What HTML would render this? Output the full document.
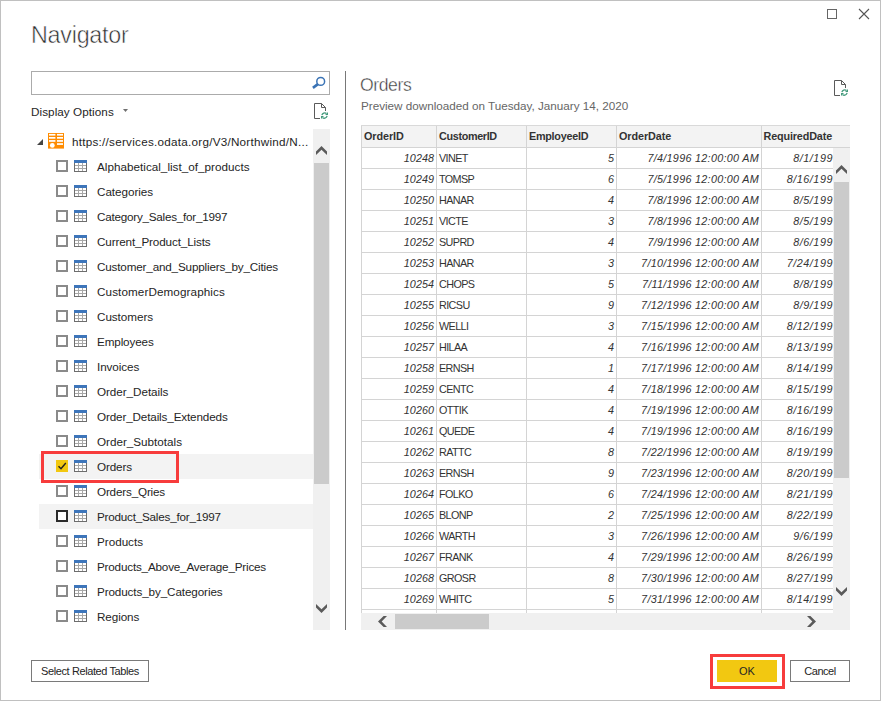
<!DOCTYPE html>
<html><head><meta charset="utf-8"><title>Navigator</title>
<style>
*{box-sizing:border-box;margin:0;padding:0}
html,body{width:881px;height:701px;overflow:hidden;background:#fff}
body{font-family:"Liberation Sans",sans-serif;font-size:12px;color:#252525;position:relative}
#win{position:absolute;left:0;top:0;width:881px;height:701px;background:#fff}
#frame{position:absolute;left:0;top:0;width:881px;height:701px;border:1px solid #c0c0c0;pointer-events:none}
.abs{position:absolute}
#title{position:absolute;left:31px;top:20px;font-size:23.3px;color:#2e2e2e;font-weight:normal;line-height:30px;letter-spacing:-0.245px;-webkit-text-stroke:0.55px #fff}
#search{position:absolute;left:31px;top:71px;width:299px;height:24px;border:1px solid #ababab;background:#fff}
#dopt{position:absolute;left:31px;top:104px;font-size:11.7px;line-height:16px;color:#252525;letter-spacing:0.064px}
#tree{position:absolute;left:0;top:0;width:313px;height:630px;overflow:hidden}
.item{position:absolute;left:39px;width:274px;height:25px}
.item.sel,.item.hov{background:#f3f3f3}
.cb{position:absolute;left:17px;top:6px;width:12px;height:12px;border:2px solid #8a8a8a;background:#fff}
.cb.dark{border-color:#2b2b2b}
.cb.on{border:0;background:#f2c811}
.cb svg{position:absolute;left:0;top:0}
.ti{position:absolute;left:35px;top:6px}
.lbl{position:absolute;left:58px;top:5px;line-height:16px;font-size:11.7px;white-space:nowrap;color:#252525}
#root{position:absolute;left:72px;top:134px;line-height:16px;white-space:nowrap;font-size:11.7px;letter-spacing:0.252px}
#vsb1{position:absolute;left:313px;top:129px;width:17px;height:501px;background:#f0f0f0}
#vsb1 .thumb{position:absolute;left:1px;top:34px;width:15px;height:321px;background:#cbcbcb}
#divider{position:absolute;left:345px;top:71px;width:1px;height:559px;background:#787878}
#ptitle{position:absolute;left:360px;top:73px;font-size:17.6px;line-height:24px;color:#363636;letter-spacing:-0.412px;-webkit-text-stroke:0.4px #fff}
#psub{position:absolute;left:361px;top:98px;font-size:11.7px;line-height:16px;color:#666;letter-spacing:-0.004px}
#grid{position:absolute;left:361px;top:125px;width:489px;height:488px;overflow:hidden;background:#fff}
#ghead{position:absolute;left:0;top:0;width:489px;height:23px;background:#f3f3f3;border-top:1px solid #d9d9d9;border-bottom:1px solid #d4d4d4}
.h{position:absolute;top:0;height:21px;line-height:21px;font-weight:bold;font-size:10.8px;color:#333;padding-left:2px;border-left:1px solid #d4d4d4;white-space:nowrap}
.tr{position:absolute;left:0;width:472px;height:22px;border-bottom:1px solid #d4d4d4}
.c{position:absolute;top:0;height:21px;line-height:22px;border-left:1px solid #d4d4d4;white-space:nowrap;overflow:hidden;color:#333;font-size:10.8px;padding:0 2px 0 3px}
.c.n{text-align:right;font-style:italic}
.c1{left:0;width:75px;letter-spacing:0.035px} .c2{left:75px;width:90px;letter-spacing:-0.599px;padding-left:2px} .c3{left:165px;width:90px} .c4{left:255px;width:145px;letter-spacing:0.287px} .c5{left:400px;width:72px;padding-right:0;letter-spacing:0.54px}
#vsb2{position:absolute;left:833px;top:148px;width:17px;height:482px;background:#f0f0f0}
#vsb2 .thumb{position:absolute;left:1px;top:34px;width:15px;height:296px;background:#cbcbcb}
#hsb{position:absolute;left:361px;top:613px;width:472px;height:17px;background:#f0f0f0}
#hsb .thumb{position:absolute;left:34px;top:1px;width:94px;height:15px;background:#cbcbcb}
.btn{position:absolute;top:660px;height:22px;border:1px solid #7a7a7a;background:#fff;font-size:11px;line-height:20px;text-align:center;color:#252525;white-space:nowrap}
#ok{background:#f2c811;border-color:#f2c811}
.red{position:absolute;border:3px solid #f73c3c}
svg{display:block}
.arr{position:absolute}
</style></head><body>
<div id="win">
<div id="title">Navigator</div>
<svg class="abs" style="left:826px;top:8px" width="12" height="12" viewBox="0 0 12 12"><rect x="1.5" y="1.5" width="9" height="9" fill="none" stroke="#666" stroke-width="1"/></svg>
<svg class="abs" style="left:858px;top:8px" width="12" height="12" viewBox="0 0 12 12"><path d="M1 1 L11 11 M11 1 L1 11" fill="none" stroke="#555" stroke-width="1.1"/></svg>

<div id="search"></div>
<svg class="abs" style="left:310px;top:74px" width="18" height="18" viewBox="0 0 18 18"><circle cx="10.7" cy="7.4" r="3.9" fill="none" stroke="#3a73b5" stroke-width="1.5"/><path d="M7.9 10.1 L2.9 13.9" stroke="#3a73b5" stroke-width="2.6" fill="none"/></svg>
<div id="dopt">Display Options</div><svg class="abs" style="left:123px;top:109px" width="5" height="3" viewBox="0 0 5 3"><polygon points="0,0 5,0 2.5,3" fill="#707070"/></svg>
<svg class="abs" style="left:313px;top:103px" width="16" height="17" viewBox="0 0 16 17"><path d="M1.5 0.5 H8.5 L12.5 4.5 V8 M8.5 0.5 V4.5 H12.5 M1.5 0.5 V15.5 H7" fill="none" stroke="#5a5a5a" stroke-width="1"/><path d="M8.9 12.2 A2.9 2.9 0 0 1 13.4 10.4 M14.1 12.9 A2.9 2.9 0 0 1 9.6 14.7" fill="none" stroke="#439a7c" stroke-width="1.3"/><path d="M15 9 V12 H12 Z M8 16 V13 H11 Z" fill="#439a7c"/></svg>

<div id="tree">
<svg class="abs" style="left:37px;top:139px" width="6" height="6" viewBox="0 0 6 6"><path d="M6 0 V6 H0 Z" fill="#444"/></svg>
<svg class="abs" style="left:48px;top:133px" width="16" height="16" viewBox="0 0 16 16"><rect width="16" height="15.6" fill="#ff8c00"/><g fill="#fff"><rect x="1" y="0.9" width="6.4" height="1.7"/><rect x="9" y="0.9" width="6" height="1.7"/><rect x="1" y="4" width="6.4" height="1.7"/><rect x="9" y="4" width="6" height="1.7"/><rect x="1" y="7.1" width="6.4" height="1.7"/><rect x="9" y="7.1" width="6" height="1.7"/><rect x="9" y="10.2" width="6" height="1.7"/><circle cx="4.3" cy="12.4" r="2.4"/></g></svg>
<div id="root">https://services.odata.org/V3/Northwind/N...</div>
<div class="item" style="top:154px"><span class="cb"></span><svg class="ti" width="13" height="12" viewBox="0 0 13 12"><rect x="0" y="0" width="13" height="12" fill="#6d6d6d"/><rect x="0" y="0" width="13" height="3" fill="#3d75ba"/><rect x="1" y="3" width="11" height="8" fill="#fff"/><rect x="4" y="3" width="1" height="8" fill="#a8a8a8"/><rect x="8" y="3" width="1" height="8" fill="#a8a8a8"/><rect x="1" y="5" width="11" height="1" fill="#a8a8a8"/><rect x="1" y="8" width="11" height="1" fill="#a8a8a8"/></svg><span class="lbl" style="letter-spacing:0.016px">Alphabetical_list_of_products</span></div>
<div class="item" style="top:179px"><span class="cb"></span><svg class="ti" width="13" height="12" viewBox="0 0 13 12"><rect x="0" y="0" width="13" height="12" fill="#6d6d6d"/><rect x="0" y="0" width="13" height="3" fill="#3d75ba"/><rect x="1" y="3" width="11" height="8" fill="#fff"/><rect x="4" y="3" width="1" height="8" fill="#a8a8a8"/><rect x="8" y="3" width="1" height="8" fill="#a8a8a8"/><rect x="1" y="5" width="11" height="1" fill="#a8a8a8"/><rect x="1" y="8" width="11" height="1" fill="#a8a8a8"/></svg><span class="lbl" style="letter-spacing:-0.052px">Categories</span></div>
<div class="item" style="top:204px"><span class="cb"></span><svg class="ti" width="13" height="12" viewBox="0 0 13 12"><rect x="0" y="0" width="13" height="12" fill="#6d6d6d"/><rect x="0" y="0" width="13" height="3" fill="#3d75ba"/><rect x="1" y="3" width="11" height="8" fill="#fff"/><rect x="4" y="3" width="1" height="8" fill="#a8a8a8"/><rect x="8" y="3" width="1" height="8" fill="#a8a8a8"/><rect x="1" y="5" width="11" height="1" fill="#a8a8a8"/><rect x="1" y="8" width="11" height="1" fill="#a8a8a8"/></svg><span class="lbl" style="letter-spacing:-0.239px">Category_Sales_for_1997</span></div>
<div class="item" style="top:229px"><span class="cb"></span><svg class="ti" width="13" height="12" viewBox="0 0 13 12"><rect x="0" y="0" width="13" height="12" fill="#6d6d6d"/><rect x="0" y="0" width="13" height="3" fill="#3d75ba"/><rect x="1" y="3" width="11" height="8" fill="#fff"/><rect x="4" y="3" width="1" height="8" fill="#a8a8a8"/><rect x="8" y="3" width="1" height="8" fill="#a8a8a8"/><rect x="1" y="5" width="11" height="1" fill="#a8a8a8"/><rect x="1" y="8" width="11" height="1" fill="#a8a8a8"/></svg><span class="lbl" style="letter-spacing:-0.132px">Current_Product_Lists</span></div>
<div class="item" style="top:254px"><span class="cb"></span><svg class="ti" width="13" height="12" viewBox="0 0 13 12"><rect x="0" y="0" width="13" height="12" fill="#6d6d6d"/><rect x="0" y="0" width="13" height="3" fill="#3d75ba"/><rect x="1" y="3" width="11" height="8" fill="#fff"/><rect x="4" y="3" width="1" height="8" fill="#a8a8a8"/><rect x="8" y="3" width="1" height="8" fill="#a8a8a8"/><rect x="1" y="5" width="11" height="1" fill="#a8a8a8"/><rect x="1" y="8" width="11" height="1" fill="#a8a8a8"/></svg><span class="lbl" style="letter-spacing:-0.17px">Customer_and_Suppliers_by_Cities</span></div>
<div class="item" style="top:279px"><span class="cb"></span><svg class="ti" width="13" height="12" viewBox="0 0 13 12"><rect x="0" y="0" width="13" height="12" fill="#6d6d6d"/><rect x="0" y="0" width="13" height="3" fill="#3d75ba"/><rect x="1" y="3" width="11" height="8" fill="#fff"/><rect x="4" y="3" width="1" height="8" fill="#a8a8a8"/><rect x="8" y="3" width="1" height="8" fill="#a8a8a8"/><rect x="1" y="5" width="11" height="1" fill="#a8a8a8"/><rect x="1" y="8" width="11" height="1" fill="#a8a8a8"/></svg><span class="lbl" style="letter-spacing:0.094px">CustomerDemographics</span></div>
<div class="item" style="top:304px"><span class="cb"></span><svg class="ti" width="13" height="12" viewBox="0 0 13 12"><rect x="0" y="0" width="13" height="12" fill="#6d6d6d"/><rect x="0" y="0" width="13" height="3" fill="#3d75ba"/><rect x="1" y="3" width="11" height="8" fill="#fff"/><rect x="4" y="3" width="1" height="8" fill="#a8a8a8"/><rect x="8" y="3" width="1" height="8" fill="#a8a8a8"/><rect x="1" y="5" width="11" height="1" fill="#a8a8a8"/><rect x="1" y="8" width="11" height="1" fill="#a8a8a8"/></svg><span class="lbl" style="letter-spacing:-0.056px">Customers</span></div>
<div class="item" style="top:329px"><span class="cb"></span><svg class="ti" width="13" height="12" viewBox="0 0 13 12"><rect x="0" y="0" width="13" height="12" fill="#6d6d6d"/><rect x="0" y="0" width="13" height="3" fill="#3d75ba"/><rect x="1" y="3" width="11" height="8" fill="#fff"/><rect x="4" y="3" width="1" height="8" fill="#a8a8a8"/><rect x="8" y="3" width="1" height="8" fill="#a8a8a8"/><rect x="1" y="5" width="11" height="1" fill="#a8a8a8"/><rect x="1" y="8" width="11" height="1" fill="#a8a8a8"/></svg><span class="lbl" style="letter-spacing:-0.135px">Employees</span></div>
<div class="item" style="top:354px"><span class="cb"></span><svg class="ti" width="13" height="12" viewBox="0 0 13 12"><rect x="0" y="0" width="13" height="12" fill="#6d6d6d"/><rect x="0" y="0" width="13" height="3" fill="#3d75ba"/><rect x="1" y="3" width="11" height="8" fill="#fff"/><rect x="4" y="3" width="1" height="8" fill="#a8a8a8"/><rect x="8" y="3" width="1" height="8" fill="#a8a8a8"/><rect x="1" y="5" width="11" height="1" fill="#a8a8a8"/><rect x="1" y="8" width="11" height="1" fill="#a8a8a8"/></svg><span class="lbl" style="letter-spacing:-0.084px">Invoices</span></div>
<div class="item" style="top:379px"><span class="cb"></span><svg class="ti" width="13" height="12" viewBox="0 0 13 12"><rect x="0" y="0" width="13" height="12" fill="#6d6d6d"/><rect x="0" y="0" width="13" height="3" fill="#3d75ba"/><rect x="1" y="3" width="11" height="8" fill="#fff"/><rect x="4" y="3" width="1" height="8" fill="#a8a8a8"/><rect x="8" y="3" width="1" height="8" fill="#a8a8a8"/><rect x="1" y="5" width="11" height="1" fill="#a8a8a8"/><rect x="1" y="8" width="11" height="1" fill="#a8a8a8"/></svg><span class="lbl" style="letter-spacing:-0.054px">Order_Details</span></div>
<div class="item" style="top:404px"><span class="cb"></span><svg class="ti" width="13" height="12" viewBox="0 0 13 12"><rect x="0" y="0" width="13" height="12" fill="#6d6d6d"/><rect x="0" y="0" width="13" height="3" fill="#3d75ba"/><rect x="1" y="3" width="11" height="8" fill="#fff"/><rect x="4" y="3" width="1" height="8" fill="#a8a8a8"/><rect x="8" y="3" width="1" height="8" fill="#a8a8a8"/><rect x="1" y="5" width="11" height="1" fill="#a8a8a8"/><rect x="1" y="8" width="11" height="1" fill="#a8a8a8"/></svg><span class="lbl" style="letter-spacing:-0.14px">Order_Details_Extendeds</span></div>
<div class="item" style="top:429px"><span class="cb"></span><svg class="ti" width="13" height="12" viewBox="0 0 13 12"><rect x="0" y="0" width="13" height="12" fill="#6d6d6d"/><rect x="0" y="0" width="13" height="3" fill="#3d75ba"/><rect x="1" y="3" width="11" height="8" fill="#fff"/><rect x="4" y="3" width="1" height="8" fill="#a8a8a8"/><rect x="8" y="3" width="1" height="8" fill="#a8a8a8"/><rect x="1" y="5" width="11" height="1" fill="#a8a8a8"/><rect x="1" y="8" width="11" height="1" fill="#a8a8a8"/></svg><span class="lbl" style="letter-spacing:-0.007px">Order_Subtotals</span></div>
<div class="item sel" style="top:454px"><span class="cb on"><svg width="12" height="12" viewBox="0 0 12 12"><path d="M2.5 6.2 L5 8.8 L9.8 3" fill="none" stroke="#222" stroke-width="1.4"/></svg></span><svg class="ti" width="13" height="12" viewBox="0 0 13 12"><rect x="0" y="0" width="13" height="12" fill="#6d6d6d"/><rect x="0" y="0" width="13" height="3" fill="#3d75ba"/><rect x="1" y="3" width="11" height="8" fill="#fff"/><rect x="4" y="3" width="1" height="8" fill="#a8a8a8"/><rect x="8" y="3" width="1" height="8" fill="#a8a8a8"/><rect x="1" y="5" width="11" height="1" fill="#a8a8a8"/><rect x="1" y="8" width="11" height="1" fill="#a8a8a8"/></svg><span class="lbl" style="letter-spacing:-0.12px">Orders</span></div>
<div class="item" style="top:479px"><span class="cb"></span><svg class="ti" width="13" height="12" viewBox="0 0 13 12"><rect x="0" y="0" width="13" height="12" fill="#6d6d6d"/><rect x="0" y="0" width="13" height="3" fill="#3d75ba"/><rect x="1" y="3" width="11" height="8" fill="#fff"/><rect x="4" y="3" width="1" height="8" fill="#a8a8a8"/><rect x="8" y="3" width="1" height="8" fill="#a8a8a8"/><rect x="1" y="5" width="11" height="1" fill="#a8a8a8"/><rect x="1" y="8" width="11" height="1" fill="#a8a8a8"/></svg><span class="lbl" style="letter-spacing:-0.179px">Orders_Qries</span></div>
<div class="item hov" style="top:504px"><span class="cb dark"></span><svg class="ti" width="13" height="12" viewBox="0 0 13 12"><rect x="0" y="0" width="13" height="12" fill="#6d6d6d"/><rect x="0" y="0" width="13" height="3" fill="#3d75ba"/><rect x="1" y="3" width="11" height="8" fill="#fff"/><rect x="4" y="3" width="1" height="8" fill="#a8a8a8"/><rect x="8" y="3" width="1" height="8" fill="#a8a8a8"/><rect x="1" y="5" width="11" height="1" fill="#a8a8a8"/><rect x="1" y="8" width="11" height="1" fill="#a8a8a8"/></svg><span class="lbl" style="letter-spacing:-0.221px">Product_Sales_for_1997</span></div>
<div class="item" style="top:529px"><span class="cb"></span><svg class="ti" width="13" height="12" viewBox="0 0 13 12"><rect x="0" y="0" width="13" height="12" fill="#6d6d6d"/><rect x="0" y="0" width="13" height="3" fill="#3d75ba"/><rect x="1" y="3" width="11" height="8" fill="#fff"/><rect x="4" y="3" width="1" height="8" fill="#a8a8a8"/><rect x="8" y="3" width="1" height="8" fill="#a8a8a8"/><rect x="1" y="5" width="11" height="1" fill="#a8a8a8"/><rect x="1" y="8" width="11" height="1" fill="#a8a8a8"/></svg><span class="lbl" style="letter-spacing:-0.015px">Products</span></div>
<div class="item" style="top:554px"><span class="cb"></span><svg class="ti" width="13" height="12" viewBox="0 0 13 12"><rect x="0" y="0" width="13" height="12" fill="#6d6d6d"/><rect x="0" y="0" width="13" height="3" fill="#3d75ba"/><rect x="1" y="3" width="11" height="8" fill="#fff"/><rect x="4" y="3" width="1" height="8" fill="#a8a8a8"/><rect x="8" y="3" width="1" height="8" fill="#a8a8a8"/><rect x="1" y="5" width="11" height="1" fill="#a8a8a8"/><rect x="1" y="8" width="11" height="1" fill="#a8a8a8"/></svg><span class="lbl" style="letter-spacing:-0.191px">Products_Above_Average_Prices</span></div>
<div class="item" style="top:579px"><span class="cb"></span><svg class="ti" width="13" height="12" viewBox="0 0 13 12"><rect x="0" y="0" width="13" height="12" fill="#6d6d6d"/><rect x="0" y="0" width="13" height="3" fill="#3d75ba"/><rect x="1" y="3" width="11" height="8" fill="#fff"/><rect x="4" y="3" width="1" height="8" fill="#a8a8a8"/><rect x="8" y="3" width="1" height="8" fill="#a8a8a8"/><rect x="1" y="5" width="11" height="1" fill="#a8a8a8"/><rect x="1" y="8" width="11" height="1" fill="#a8a8a8"/></svg><span class="lbl" style="letter-spacing:-0.113px">Products_by_Categories</span></div>
<div class="item" style="top:604px"><span class="cb"></span><svg class="ti" width="13" height="12" viewBox="0 0 13 12"><rect x="0" y="0" width="13" height="12" fill="#6d6d6d"/><rect x="0" y="0" width="13" height="3" fill="#3d75ba"/><rect x="1" y="3" width="11" height="8" fill="#fff"/><rect x="4" y="3" width="1" height="8" fill="#a8a8a8"/><rect x="8" y="3" width="1" height="8" fill="#a8a8a8"/><rect x="1" y="5" width="11" height="1" fill="#a8a8a8"/><rect x="1" y="8" width="11" height="1" fill="#a8a8a8"/></svg><span class="lbl" style="letter-spacing:-0.097px">Regions</span></div>
</div>
<div id="vsb1"><div class="thumb"></div></div>
<svg class="abs" style="left:316px;top:146px" width="11" height="9" viewBox="0 0 11.4 9.3" preserveAspectRatio="none"><polygon points="5.7,0 11.4,5.8 11.4,9.3 5.7,3.8 0,9.3 0,5.8" fill="#5a5a5a"/></svg>
<svg class="abs" style="left:316px;top:604px" width="11" height="9" viewBox="0 0 11.4 9.3" preserveAspectRatio="none"><polygon points="5.7,9.3 11.4,3.5 11.4,0 5.7,5.5 0,0 0,3.5" fill="#5a5a5a"/></svg>
<div id="divider"></div>

<div id="ptitle">Orders</div>
<div id="psub">Preview downloaded on Tuesday, January 14, 2020</div>
<svg class="abs" style="left:833px;top:80px" width="16" height="17" viewBox="0 0 16 17"><path d="M1.5 0.5 H8.5 L12.5 4.5 V8 M8.5 0.5 V4.5 H12.5 M1.5 0.5 V15.5 H7" fill="none" stroke="#5a5a5a" stroke-width="1"/><path d="M8.9 12.2 A2.9 2.9 0 0 1 13.4 10.4 M14.1 12.9 A2.9 2.9 0 0 1 9.6 14.7" fill="none" stroke="#439a7c" stroke-width="1.3"/><path d="M15 9 V12 H12 Z M8 16 V13 H11 Z" fill="#439a7c"/></svg>

<div id="grid">
<div id="ghead"><span class="h" style="left:0;width:75px;letter-spacing:-0.057px">OrderID</span><span class="h" style="left:75px;width:90px;letter-spacing:-0.339px">CustomerID</span><span class="h" style="left:165px;width:90px;letter-spacing:-0.26px">EmployeeID</span><span class="h" style="left:255px;width:145px;letter-spacing:-0.056px">OrderDate</span><span class="h" style="left:400px;width:89px;padding-left:1.5px;letter-spacing:-0.141px">RequiredDate</span></div>
<div class="tr" style="top:22px"><span class="c c1 n">10248</span><span class="c c2">VINET</span><span class="c c3 n">5</span><span class="c c4 n">7/4/1996 12:00:00 AM</span><span class="c c5 n">8/1/199</span></div>
<div class="tr" style="top:43px"><span class="c c1 n">10249</span><span class="c c2">TOMSP</span><span class="c c3 n">6</span><span class="c c4 n">7/5/1996 12:00:00 AM</span><span class="c c5 n">8/16/199</span></div>
<div class="tr" style="top:64px"><span class="c c1 n">10250</span><span class="c c2">HANAR</span><span class="c c3 n">4</span><span class="c c4 n">7/8/1996 12:00:00 AM</span><span class="c c5 n">8/5/199</span></div>
<div class="tr" style="top:85px"><span class="c c1 n">10251</span><span class="c c2">VICTE</span><span class="c c3 n">3</span><span class="c c4 n">7/8/1996 12:00:00 AM</span><span class="c c5 n">8/5/199</span></div>
<div class="tr" style="top:106px"><span class="c c1 n">10252</span><span class="c c2">SUPRD</span><span class="c c3 n">4</span><span class="c c4 n">7/9/1996 12:00:00 AM</span><span class="c c5 n">8/6/199</span></div>
<div class="tr" style="top:127px"><span class="c c1 n">10253</span><span class="c c2">HANAR</span><span class="c c3 n">3</span><span class="c c4 n">7/10/1996 12:00:00 AM</span><span class="c c5 n">7/24/199</span></div>
<div class="tr" style="top:148px"><span class="c c1 n">10254</span><span class="c c2">CHOPS</span><span class="c c3 n">5</span><span class="c c4 n">7/11/1996 12:00:00 AM</span><span class="c c5 n">8/8/199</span></div>
<div class="tr" style="top:169px"><span class="c c1 n">10255</span><span class="c c2">RICSU</span><span class="c c3 n">9</span><span class="c c4 n">7/12/1996 12:00:00 AM</span><span class="c c5 n">8/9/199</span></div>
<div class="tr" style="top:190px"><span class="c c1 n">10256</span><span class="c c2">WELLI</span><span class="c c3 n">3</span><span class="c c4 n">7/15/1996 12:00:00 AM</span><span class="c c5 n">8/12/199</span></div>
<div class="tr" style="top:211px"><span class="c c1 n">10257</span><span class="c c2">HILAA</span><span class="c c3 n">4</span><span class="c c4 n">7/16/1996 12:00:00 AM</span><span class="c c5 n">8/13/199</span></div>
<div class="tr" style="top:232px"><span class="c c1 n">10258</span><span class="c c2">ERNSH</span><span class="c c3 n">1</span><span class="c c4 n">7/17/1996 12:00:00 AM</span><span class="c c5 n">8/14/199</span></div>
<div class="tr" style="top:253px"><span class="c c1 n">10259</span><span class="c c2">CENTC</span><span class="c c3 n">4</span><span class="c c4 n">7/18/1996 12:00:00 AM</span><span class="c c5 n">8/15/199</span></div>
<div class="tr" style="top:274px"><span class="c c1 n">10260</span><span class="c c2">OTTIK</span><span class="c c3 n">4</span><span class="c c4 n">7/19/1996 12:00:00 AM</span><span class="c c5 n">8/16/199</span></div>
<div class="tr" style="top:295px"><span class="c c1 n">10261</span><span class="c c2">QUEDE</span><span class="c c3 n">4</span><span class="c c4 n">7/19/1996 12:00:00 AM</span><span class="c c5 n">8/16/199</span></div>
<div class="tr" style="top:316px"><span class="c c1 n">10262</span><span class="c c2">RATTC</span><span class="c c3 n">8</span><span class="c c4 n">7/22/1996 12:00:00 AM</span><span class="c c5 n">8/19/199</span></div>
<div class="tr" style="top:337px"><span class="c c1 n">10263</span><span class="c c2">ERNSH</span><span class="c c3 n">9</span><span class="c c4 n">7/23/1996 12:00:00 AM</span><span class="c c5 n">8/20/199</span></div>
<div class="tr" style="top:358px"><span class="c c1 n">10264</span><span class="c c2">FOLKO</span><span class="c c3 n">6</span><span class="c c4 n">7/24/1996 12:00:00 AM</span><span class="c c5 n">8/21/199</span></div>
<div class="tr" style="top:379px"><span class="c c1 n">10265</span><span class="c c2">BLONP</span><span class="c c3 n">2</span><span class="c c4 n">7/25/1996 12:00:00 AM</span><span class="c c5 n">8/22/199</span></div>
<div class="tr" style="top:400px"><span class="c c1 n">10266</span><span class="c c2">WARTH</span><span class="c c3 n">3</span><span class="c c4 n">7/26/1996 12:00:00 AM</span><span class="c c5 n">9/6/199</span></div>
<div class="tr" style="top:421px"><span class="c c1 n">10267</span><span class="c c2">FRANK</span><span class="c c3 n">4</span><span class="c c4 n">7/29/1996 12:00:00 AM</span><span class="c c5 n">8/26/199</span></div>
<div class="tr" style="top:442px"><span class="c c1 n">10268</span><span class="c c2">GROSR</span><span class="c c3 n">8</span><span class="c c4 n">7/30/1996 12:00:00 AM</span><span class="c c5 n">8/27/199</span></div>
<div class="tr" style="top:463px"><span class="c c1 n">10269</span><span class="c c2">WHITC</span><span class="c c3 n">5</span><span class="c c4 n">7/31/1996 12:00:00 AM</span><span class="c c5 n">8/14/199</span></div>
<div class="tr" style="top:484px"><span class="c c1"></span><span class="c c2"></span><span class="c c3"></span><span class="c c4"></span><span class="c c5"></span></div>
</div>
<div id="vsb2"><div class="thumb"></div></div>
<svg class="abs" style="left:836px;top:165px" width="11" height="9" viewBox="0 0 11.4 9.3" preserveAspectRatio="none"><polygon points="5.7,0 11.4,5.8 11.4,9.3 5.7,3.8 0,9.3 0,5.8" fill="#5a5a5a"/></svg>
<svg class="abs" style="left:836px;top:587px" width="11" height="9" viewBox="0 0 11.4 9.3" preserveAspectRatio="none"><polygon points="5.7,9.3 11.4,3.5 11.4,0 5.7,5.5 0,0 0,3.5" fill="#5a5a5a"/></svg>
<div id="hsb"><div class="thumb"></div></div>
<svg class="abs" style="left:378px;top:616px" width="9" height="11" viewBox="0 0 9.3 11.4" preserveAspectRatio="none"><polygon points="0,5.7 5.8,0 9.3,0 3.8,5.7 9.3,11.4 5.8,11.4" fill="#5a5a5a"/></svg>
<svg class="abs" style="left:807px;top:616px" width="9" height="11" viewBox="0 0 9.3 11.4" preserveAspectRatio="none"><polygon points="9.3,5.7 3.5,0 0,0 5.5,5.7 0,11.4 3.5,11.4" fill="#5a5a5a"/></svg>

<div class="red" style="left:41px;top:451px;width:138px;height:32px"></div>
<div class="btn" style="left:31px;width:118px;letter-spacing:-0.4px">Select Related Tables</div>
<div class="btn" id="ok" style="left:717px;width:60px">OK</div>
<div class="btn" style="left:790px;width:60px;letter-spacing:-0.457px">Cancel</div>
<div class="red" style="left:710px;top:654px;width:75px;height:35px"></div>
<div id="frame"></div>
</div>
</body></html>
